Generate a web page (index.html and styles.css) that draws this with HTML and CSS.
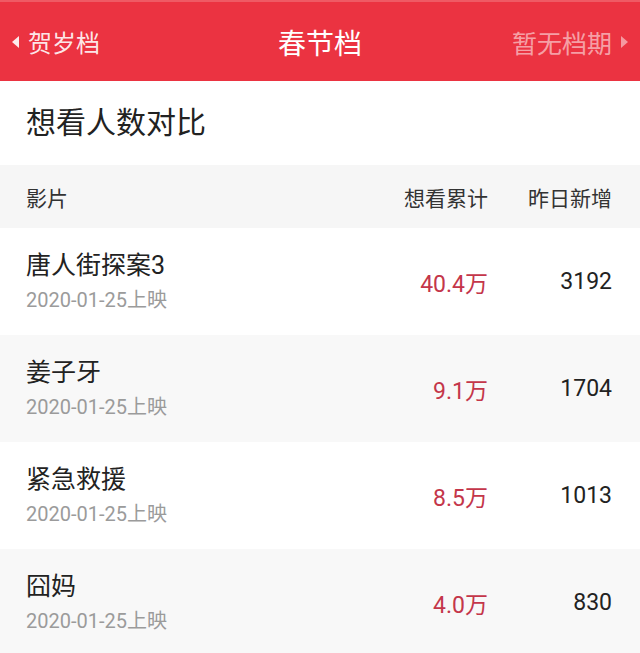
FILE: index.html
```html
<!DOCTYPE html>
<html lang="zh">
<head>
<meta charset="utf-8">
<link rel="stylesheet" href="styles.css">
</head>
<body>
<header class="topbar">
  <div class="nav nav-left"><span class="arrow arrow-left"></span><span>贺岁档</span></div>
  <div class="nav-title">春节档</div>
  <div class="nav nav-right"><span>暂无档期</span><span class="arrow arrow-right"></span></div>
</header>
<section class="section-title">想看人数对比</section>
<div class="table">
  <div class="row head">
    <div class="c-name">影片</div>
    <div class="c-num">想看累计</div>
    <div class="c-num">昨日新增</div>
  </div>
  <div class="row item">
    <div class="c-name"><div class="title">唐人街探案3</div><div class="date">2020-01-25上映</div></div>
    <div class="c-num red">40.4万</div>
    <div class="c-num dark">3192</div>
  </div>
  <div class="row item alt">
    <div class="c-name"><div class="title">姜子牙</div><div class="date">2020-01-25上映</div></div>
    <div class="c-num red">9.1万</div>
    <div class="c-num dark">1704</div>
  </div>
  <div class="row item">
    <div class="c-name"><div class="title">紧急救援</div><div class="date">2020-01-25上映</div></div>
    <div class="c-num red">8.5万</div>
    <div class="c-num dark">1013</div>
  </div>
  <div class="row item alt">
    <div class="c-name"><div class="title">囧妈</div><div class="date">2020-01-25上映</div></div>
    <div class="c-num red">4.0万</div>
    <div class="c-num dark">830</div>
  </div>
</div>
</body>
</html>
```
FILE: styles.css
```css
* { box-sizing: border-box; margin: 0; padding: 0; }
html, body { width: 640px; height: 653px; overflow: hidden; background: #fff; }
body { font-family: Roboto, "Noto Sans CJK SC", sans-serif; color: #222; }

.topbar {
  height: 81px;
  background: #eb3341;
  border-top: 2px solid #ef5a64;
  display: grid;
  grid-template-columns: 1fr auto 1fr;
  align-items: center;
  padding: 0 12px 0 12px;
}
.nav { display: flex; align-items: center; font-size: 24px; }
.nav-left { color: rgba(255,255,255,0.9); gap: 9px; }
.nav-right { justify-self: end; color: rgba(255,255,255,0.55); gap: 9px; font-size: 25px; }
.nav-title { color: #fff; font-size: 28px; }
.arrow { width: 0; height: 0; border-top: 6px solid transparent; border-bottom: 6px solid transparent; }
.arrow-left { border-right: 7px solid rgba(255,255,255,0.9); }
.arrow-right { border-left: 7px solid rgba(255,255,255,0.5); }

.section-title {
  height: 84px;
  display: flex;
  align-items: center;
  padding: 0 0 6px 26px;
  font-size: 30px;
  color: #222;
}

.row {
  display: grid;
  grid-template-columns: 1fr 160px 124px;
  align-items: center;
  padding: 0 28px 0 26px;
}
.head { height: 63px; background: #f6f6f6; font-size: 21px; color: #333; }
.item { height: 107px; background: #fff; }
.item.alt { background: #f8f8f8; }
.c-num { text-align: right; }
.title { font-size: 25px; color: #222; line-height: 32px; }
.date { font-size: 20px; color: #9b9b9b; line-height: 26px; margin-top: 5px; }
.red { color: #c4364a; font-size: 23px; }
.dark { color: #222; font-size: 23px; }
```
